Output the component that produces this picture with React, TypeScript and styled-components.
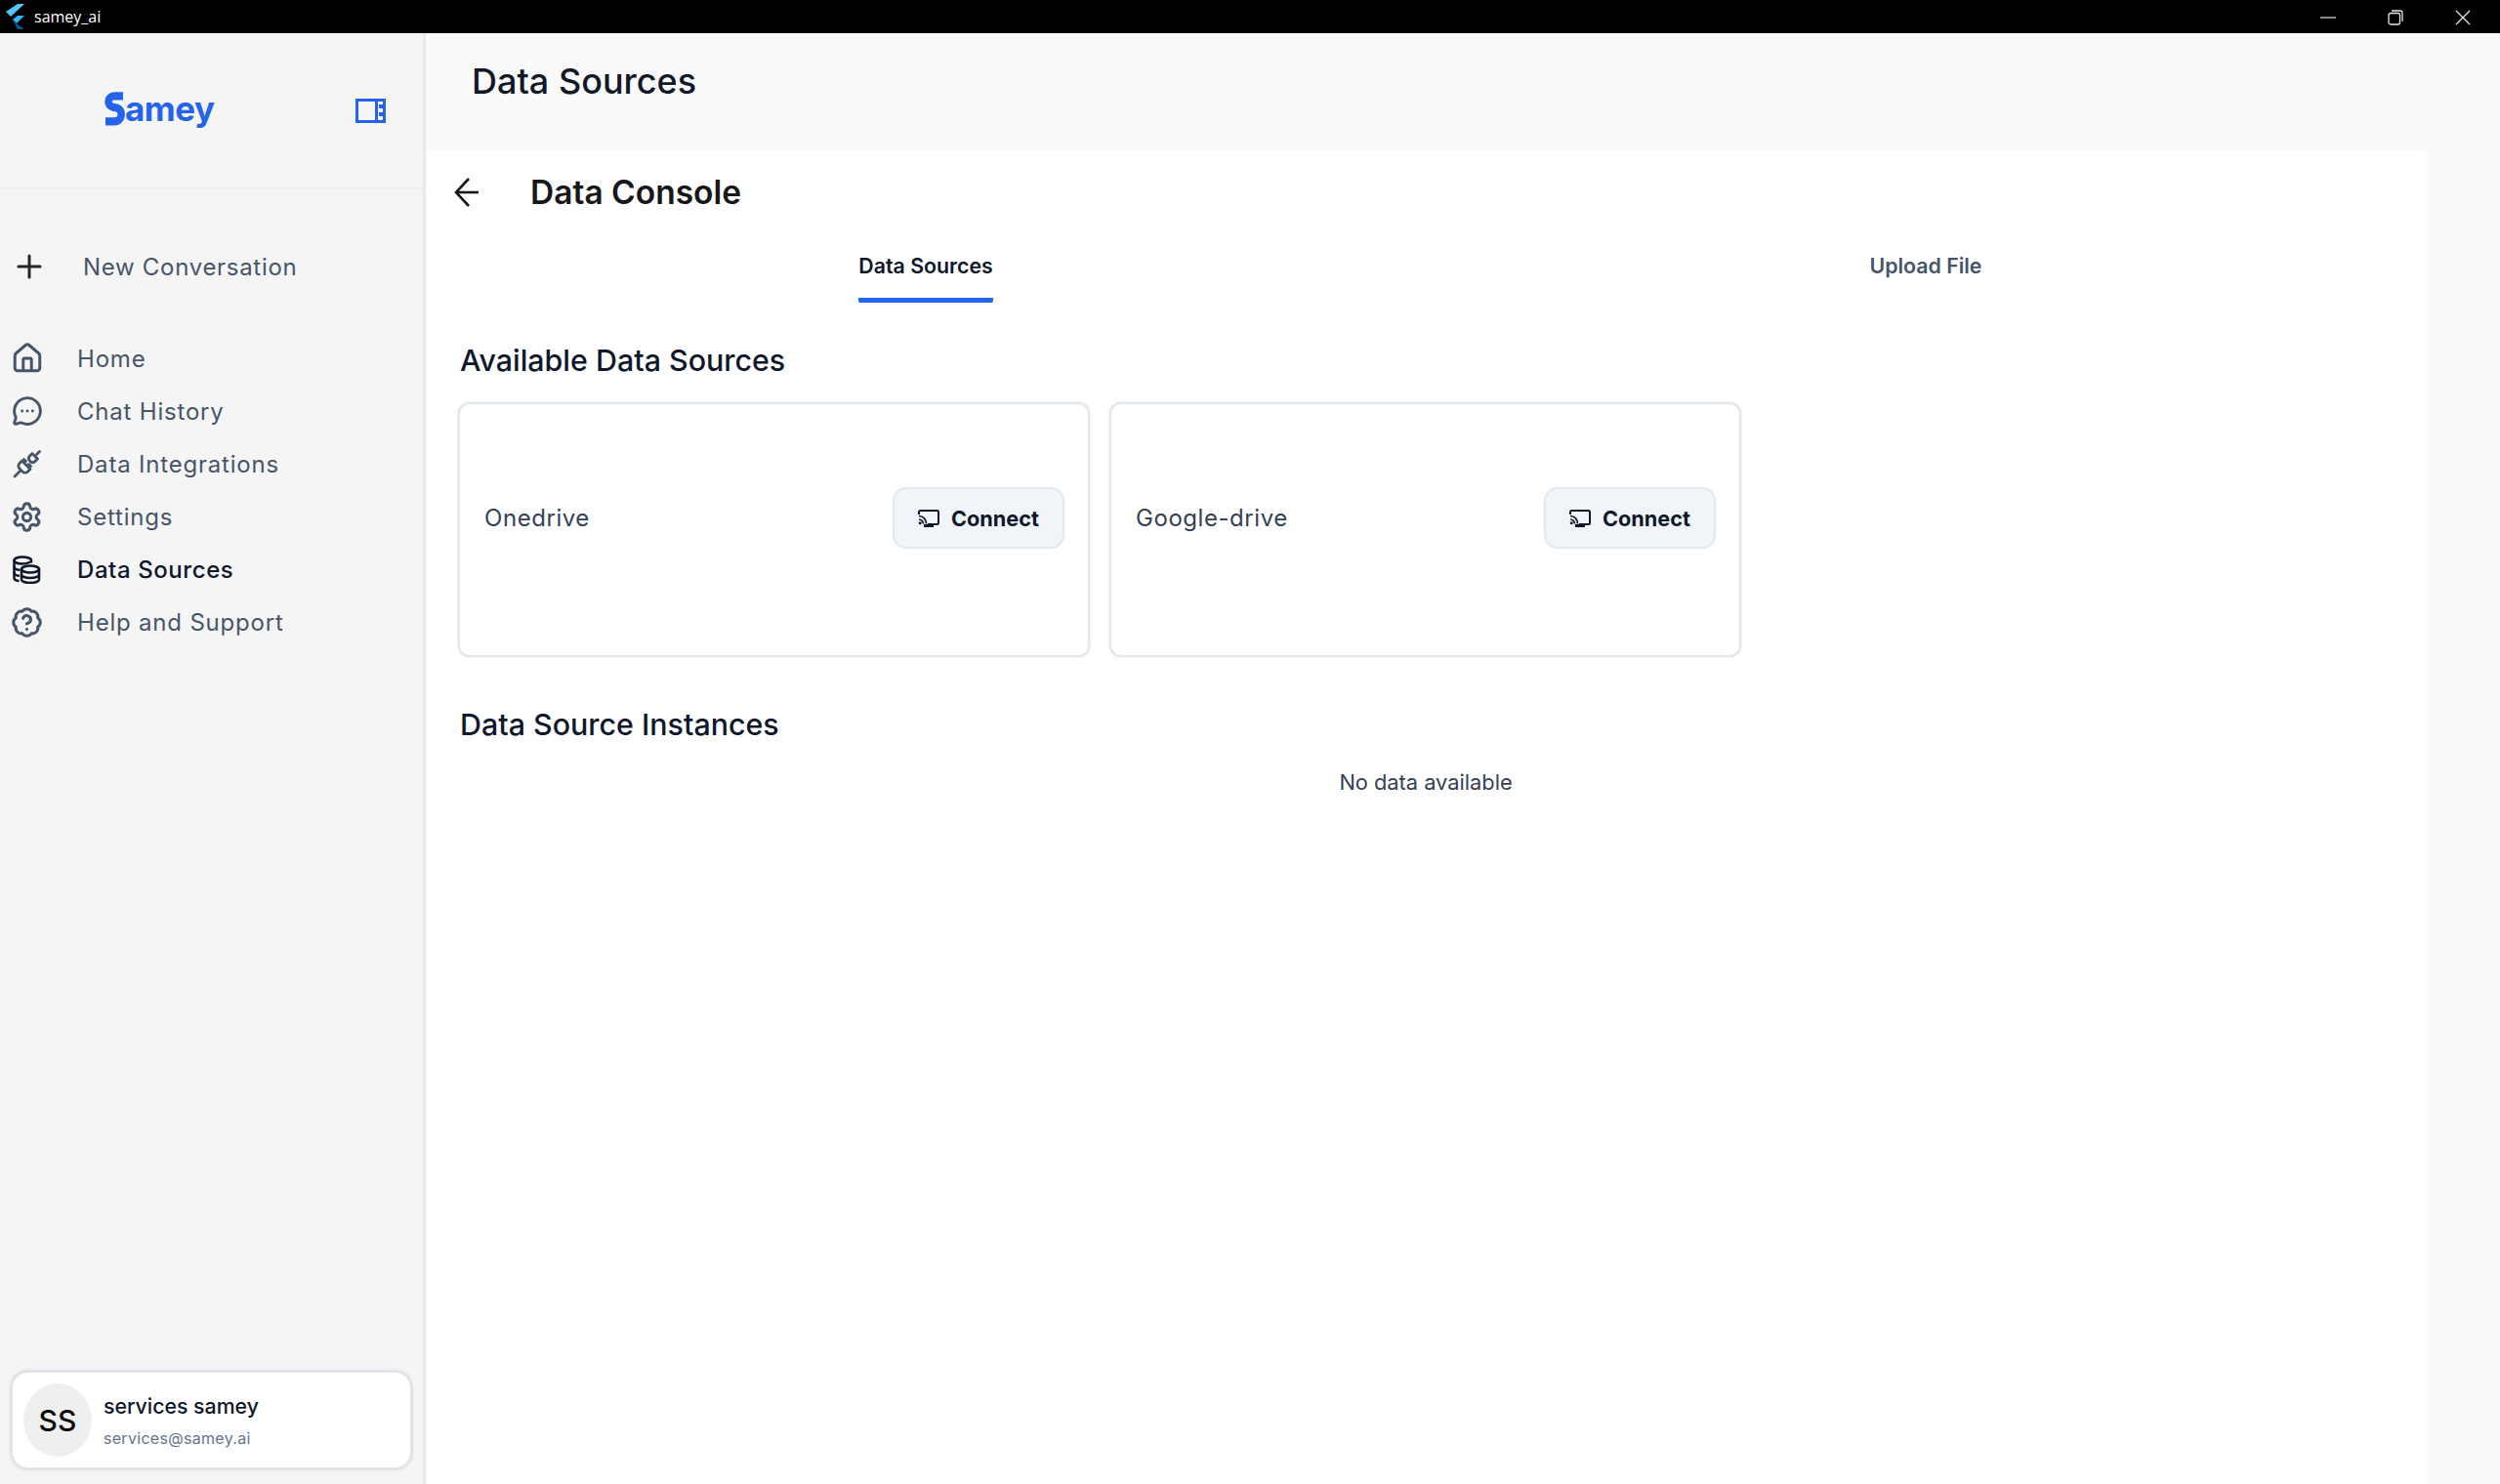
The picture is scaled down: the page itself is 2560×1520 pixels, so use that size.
import React from 'react';
import styled, { createGlobalStyle } from 'styled-components';
import { BadgeQuestionMark, House, MessageCircleMore, Plus, Settings } from 'lucide-react';

const GlobalStyle = createGlobalStyle`
  html, body {
    margin: 0;
    padding: 0;
    background: #fafafa;
  }
  * {
    box-sizing: border-box;
  }
`;

const Window = styled.div`
  width: 2560px;
  height: 1520px;
  display: flex;
  flex-direction: column;
  overflow: hidden;
  font-family: Inter, "Liberation Sans", sans-serif;
  background: #fafafa;
`;

// Системная полоса окна
const TitleBar = styled.div`
  height: 34px;
  flex: none;
  background: #000;
  display: flex;
  align-items: center;
  padding-left: 5px;
  color: #fff;
`;

const AppName = styled.span`
  margin-left: 10px;
  font-family: "Open Sans", "Liberation Sans", sans-serif;
  font-size: 16px;
`;

const WindowButtons = styled.div`
  margin-left: auto;
  display: flex;
  align-items: center;
  gap: 53px;
  padding-right: 16px;
  padding-top: 2px;
  margin-right: 14px;
`;

const Body = styled.div`
  flex: 1;
  display: flex;
  min-height: 0;
`;

const Sidebar = styled.aside`
  width: 436px;
  flex: none;
  background: #f5f5f5;
  border-right: 3px solid #e9e9e9;
  display: flex;
  flex-direction: column;
`;

const SidebarHead = styled.div`
  height: 160px;
  flex: none;
  border-bottom: 2px solid #efefef;
  display: flex;
  align-items: center;
  padding: 0 38px 0 107px;
  justify-content: space-between;
`;

const Logo = styled.div`
  display: flex;
  align-items: flex-end;
  color: #2563eb;
  font-size: 35px;
  line-height: 40px;
  font-weight: 700;
  letter-spacing: -0.5px;
  margin-top: -5px;

  svg {
    margin-bottom: 2px;
  }
`;

const NewChat = styled.div`
  display: flex;
  align-items: center;
  gap: 36px;
  margin: 59px 0 0 11px;
  height: 40px;
  color: #475569;
  font-size: 24px;
  letter-spacing: 0.7px;

  svg {
    flex: none;
  }
`;

const Nav = styled.nav`
  display: flex;
  flex-direction: column;
  margin-top: 47px;
`;

const NavItem = styled.div<{ $active?: boolean }>`
  height: 54px;
  display: flex;
  align-items: center;
  gap: 37px;
  padding-left: 13px;
  font-size: 24px;
  letter-spacing: ${p => (p.$active ? '0.58px' : '0.8px')};
  font-weight: ${p => (p.$active ? 500 : 400)};
  color: ${p => (p.$active ? '#0f172a' : '#475569')};
`;

const IconSlot = styled.span`
  width: 29px;
  height: 29px;
  flex: none;
  display: flex;
  align-items: center;
  justify-content: center;

  svg {
    flex: none;
  }
`;

const ProfileCard = styled.div`
  margin: auto 12px 16px 12px;
  height: 99px;
  background: #fff;
  border: 1px solid #e2e8f0;
  box-shadow: 0 0 4px rgba(100, 116, 139, 0.4);
  border-radius: 16px;
  display: flex;
  align-items: center;
  padding-left: 11px;
`;

const Avatar = styled.div`
  width: 70px;
  height: 75px;
  border-radius: 50%;
  background: #efefef;
  color: #0a0a0a;
  font-size: 30px;
  font-weight: 500;
  display: flex;
  align-items: center;
  justify-content: center;
`;

const ProfileText = styled.div`
  margin-left: 12px;
  display: flex;
  flex-direction: column;
  gap: 10px;
  padding-top: 1px;
`;

const ProfileName = styled.div`
  font-size: 21.3px;
  font-weight: 500;
  color: #0f172a;
  line-height: 26px;
`;

const ProfileMail = styled.div`
  font-size: 16px;
  letter-spacing: 0.3px;
  color: #64748b;
  line-height: 20px;
`;

const Main = styled.main`
  flex: 1;
  display: flex;
  flex-direction: column;
  min-width: 0;
`;

const PageTitle = styled.h1`
  margin: 0;
  height: 120px;
  flex: none;
  padding: 24px 0 0 47px;
  font-size: 36px;
  line-height: 50px;
  font-weight: 500;
  color: #111827;
`;

const Panel = styled.section`
  width: 2048px;
  flex: 1;
  background: #fff;
`;

const ConsoleHead = styled.div`
  height: 80px;
  display: flex;
  align-items: center;
  gap: 53px;
  padding: 5px 0 0 29px;
`;

const ConsoleTitle = styled.h2`
  margin: 0;
  font-size: 33.5px;
  font-weight: 600;
  color: #18181b;
`;

const Tabs = styled.div`
  display: grid;
  grid-template-columns: 1fr 1fr;
  height: 76px;
`;

const TabCell = styled.div`
  display: flex;
  justify-content: center;
`;

const Tab = styled.div<{ $active?: boolean }>`
  height: 76px;
  padding-top: 24px;
  font-size: 21.3px;
  line-height: 28px;
  font-weight: 600;
  color: ${p => (p.$active ? '#0f172a' : '#475569')};
  border-bottom: 5px solid ${p => (p.$active ? '#2563eb' : 'transparent')};
  border-radius: 0 0 2px 2px;
`;

const Content = styled.div`
  padding: 37px 33px 0;
`;

const SectionTitle = styled.h3`
  margin: 0 0 21px 2px;
  font-size: 30.4px;
  line-height: 44px;
  font-weight: 500;
  color: #0f172a;
`;

const CardRow = styled.div`
  display: flex;
  gap: 20px;
  margin-bottom: 47px;
`;

const SourceCard = styled.div`
  width: 647px;
  height: 261px;
  border: 2px solid #e2e8f0;
  box-shadow: 0 0 2px rgba(100, 116, 139, 0.3);
  border-radius: 12px;
  display: flex;
  align-items: center;
  justify-content: space-between;
  padding: 0 24px 24px 25px;
  background: #fff;
`;

const SourceName = styled.span`
  font-size: 24px;
  letter-spacing: 0.55px;
  color: #334155;
`;

const ConnectButton = styled.button`
  width: 176px;
  height: 63px;
  border: 2px solid #e2e8f0;
  border-radius: 14px;
  background: #f1f5f9;
  display: flex;
  align-items: center;
  justify-content: center;
  gap: 12px;
  font-family: inherit;
  font-size: 21.7px;
  font-weight: 700;
  color: #0f172a;
  padding: 0;
`;

const EmptyNote = styled.div`
  text-align: center;
  font-size: 21.8px;
  color: #334155;
  margin-top: 24px;
`;

const LogoMark = () => (
  <svg width="21" height="36" viewBox="0 0 21 33" preserveAspectRatio="none" fill="none" aria-hidden="true">
    <path d="M19 5H10C6.500 5 4 7.200 4 10C4 12.500 6 14.500 9 15.500C14 15.500 17.200 18 17.200 22C17.200 26 14.300 28.800 10 28.800H1" stroke="#2563eb" strokeWidth="7.500" />
  </svg>
);

const FlutterMark = () => (
  <svg width="20" height="26" viewBox="0 0 20 26" aria-hidden="true">
    <polygon points="13,0 20,0 6,13 1,8" fill="#54c5f8" />
    <polygon points="13,12 20,12 12,20 8,16" fill="#29b6f6" />
    <polygon points="8,16 12,20 20,26 13,26" fill="#01579b" />
  </svg>
);

const WindowControls = () => (
  <WindowButtons>
    <svg width="16" height="16" viewBox="0 0 16 16" aria-hidden="true">
      <path d="M0 8H16" stroke="#e5e5e5" strokeWidth="1.2" />
    </svg>
    <svg width="16" height="16" viewBox="0 0 16 16" fill="none" aria-hidden="true">
      <rect x="1" y="3.5" width="11.5" height="11.5" rx="2" stroke="#e5e5e5" strokeWidth="1.3" />
      <path d="M4 1H13C14.2 1 15 1.8 15 3V12" stroke="#e5e5e5" strokeWidth="1.3" />
    </svg>
    <svg width="16" height="16" viewBox="0 0 16 16" aria-hidden="true">
      <path d="M1 1L15 15M15 1L1 15" stroke="#e5e5e5" strokeWidth="1.3" />
    </svg>
  </WindowButtons>
);

const PanelToggle = () => (
  <svg width="31" height="25" viewBox="0 0 31 25" fill="none" aria-hidden="true">
    <rect x="1.5" y="1.5" width="28" height="22" stroke="#2563eb" strokeWidth="3" />
    <path d="M21.5 1.5V23.5" stroke="#2563eb" strokeWidth="3" />
    <rect x="24" y="6" width="4" height="4" fill="#2563eb" />
    <rect x="24" y="14" width="4" height="4" fill="#2563eb" />
  </svg>
);

const BackArrow = () => (
  <svg width="25" height="32" viewBox="0 0 25 32" fill="none" stroke="#18181b" strokeWidth="2.600" aria-hidden="true">
    <path d="M15 2L2 16L15 30" />
    <path d="M2 16H25" />
  </svg>
);

const PlugIcon = () => (
  <svg width="29" height="29" viewBox="0 0 29 29" fill="none" stroke="#475569" strokeWidth="2.800" strokeLinecap="round" strokeLinejoin="round" aria-hidden="true">
    <path d="M20 3.500L25.500 9L23 11.500C21.500 13 19.500 13 18 11.500L17.500 11C16 9.500 16 7.500 17.500 6Z" />
    <path d="M24.500 4.500L27.500 1.500" />
    <path d="M9.500 11L18 19.500L15.500 22C14 23.500 11.500 23.500 10 22L7 19C5.500 17.500 5.500 15 7 13.500Z" />
    <path d="M7.500 21.500L2 27" />
    <path d="M13.500 11.500L11.500 9.500M18.500 16.500L16.500 14.500" />
  </svg>
);

const DatabaseIcon = () => (
  <svg width="29" height="29" viewBox="0 0 29 29" fill="none" stroke="#0f172a" strokeWidth="2.500" strokeLinecap="round" strokeLinejoin="round" aria-hidden="true">
    <ellipse cx="18" cy="14" rx="9" ry="3.500" />
    <path d="M9 14V24.500C9 26.500 13 28 18 28C23 28 27 26.500 27 24.500V14" />
    <path d="M9 19.500C9 21.500 13 23 18 23C23 23 27 21.500 27 19.500" />
    <path d="M19 6.500V5C19 3 15 1.500 10 1.500C5 1.500 1.500 3 1.500 5V23C1.500 24.500 3 25.500 5.500 26" />
    <path d="M1.500 5C1.500 7 5 8.500 10 8.500C13 8.500 15.500 8 17 7" />
    <path d="M1.500 11.500C1.500 13 3.500 14.500 6.500 14.800M1.500 17.500C1.500 19 3.500 20.300 6 20.700" />
  </svg>
);

const CastIcon = () => (
  <svg width="22" height="18" viewBox="0 0 22 18" fill="none" aria-hidden="true">
    <path d="M1 5V2.500C1 1.700 1.700 1 2.500 1H19.500C20.300 1 21 1.700 21 2.500V13.500C21 14.300 20.300 15 19.500 15H10" stroke="#0f172a" strokeWidth="2" />
    <path d="M1 6.500C5.500 6.500 8.500 10 8.500 14.500M1 10C3.500 10 5.500 12 5.500 14.500" stroke="#0f172a" strokeWidth="1.700" />
    <circle cx="2.200" cy="13.800" r="1.500" fill="#0f172a" />
    <rect x="6" y="15" width="10" height="3" fill="#0f172a" />
  </svg>
);

const navColor = '#475569';

const navItems = [
  { label: 'Home', icon: <House size={34} color={navColor} strokeWidth={2.1} /> },
  { label: 'Chat History', icon: <MessageCircleMore size={32} color={navColor} strokeWidth={2.2} /> },
  { label: 'Data Integrations', icon: <PlugIcon /> },
  { label: 'Settings', icon: <Settings size={33} color={navColor} strokeWidth={2.2} /> },
  { label: 'Data Sources', icon: <DatabaseIcon />, active: true },
  { label: 'Help and Support', icon: <BadgeQuestionMark size={33} color={navColor} strokeWidth={2.2} /> },
];

const sources = ['Onedrive', 'Google-drive'];

const App: React.FC = () => {
  return (
    <Window>
      <GlobalStyle />
      <TitleBar>
        <FlutterMark />
        <AppName>samey_ai</AppName>
        <WindowControls />
      </TitleBar>
      <Body>
        <Sidebar>
          <SidebarHead>
            <Logo>
              <LogoMark />
              amey
            </Logo>
            <PanelToggle />
          </SidebarHead>
          <NewChat>
            <Plus size={38} color="#27272a" strokeWidth={1.9} />
            New Conversation
          </NewChat>
          <Nav>
            {navItems.map(item => (
              <NavItem key={item.label} $active={item.active}>
                <IconSlot>{item.icon}</IconSlot>
                {item.label}
              </NavItem>
            ))}
          </Nav>
          <ProfileCard>
            <Avatar>SS</Avatar>
            <ProfileText>
              <ProfileName>services samey</ProfileName>
              <ProfileMail>services@samey.ai</ProfileMail>
            </ProfileText>
          </ProfileCard>
        </Sidebar>
        <Main>
          <PageTitle>Data Sources</PageTitle>
          <Panel>
            <ConsoleHead>
              <BackArrow />
              <ConsoleTitle>Data Console</ConsoleTitle>
            </ConsoleHead>
            <Tabs>
              <TabCell>
                <Tab $active>Data Sources</Tab>
              </TabCell>
              <TabCell>
                <Tab>Upload File</Tab>
              </TabCell>
            </Tabs>
            <Content>
              <SectionTitle>Available Data Sources</SectionTitle>
              <CardRow>
                {sources.map(name => (
                  <SourceCard key={name}>
                    <SourceName>{name}</SourceName>
                    <ConnectButton>
                      <CastIcon />
                      Connect
                    </ConnectButton>
                  </SourceCard>
                ))}
              </CardRow>
              <SectionTitle>Data Source Instances</SectionTitle>
              <EmptyNote>No data available</EmptyNote>
            </Content>
          </Panel>
        </Main>
      </Body>
    </Window>
  );
};

export default App;
